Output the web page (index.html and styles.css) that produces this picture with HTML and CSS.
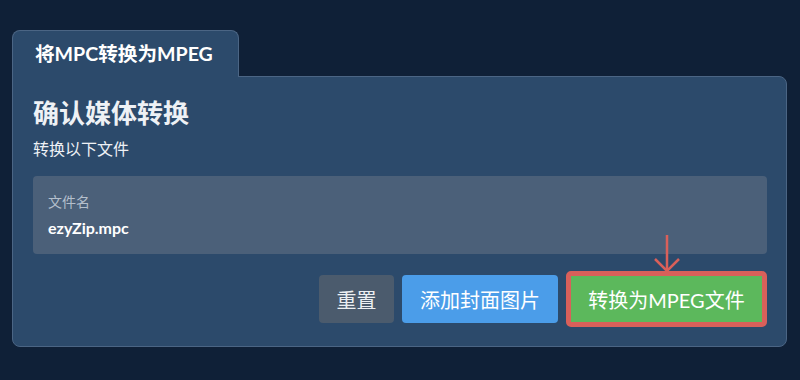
FILE: index.html
```html
<!DOCTYPE html>
<html lang="zh">
<head>
  <meta charset="UTF-8" />
  <meta name="viewport" content="width=device-width, initial-scale=1.0"/>
  <title>将MPC转换为MPEG</title>
  <link rel="stylesheet" href="styles.css">
</head>
<body>

  <div class="wrap">
    <div class="tab">将MPC转换为MPEG</div>
    <div class="panel">
      <h2 class="title">确认媒体转换</h2>
      <p class="subtitle">转换以下文件</p>

      <div class="file-box">
        <div class="file-label">文件名</div>
        <div class="file-name">ezyZip.mpc</div>
      </div>

      <div class="actions">
        <button class="btn btn-reset">重置</button>
        <button class="btn btn-cover">添加封面图片</button>
        <button class="btn btn-convert">
          转换为MPEG文件
          <svg class="arrow" width="28" height="40" viewBox="0 0 28 40">
            <line x1="14" y1="1" x2="14" y2="37" />
            <polyline points="2,25 14,37 26,25" />
          </svg>
        </button>
      </div>
    </div>
  </div>

</body>
</html>
```

FILE: styles.css
```css
body { margin: 0; padding: 0; background: #0f2037; font-family: Lato, "Noto Sans CJK SC", sans-serif; color: #fff; }
.wrap { padding: 30px 13px 0 12px; }
.tab { display: inline-block; position: relative; z-index: 1; width: 227px; height: 47px; line-height: 46px; padding: 0 0 0 22px; margin-bottom: -1px; background: #2c4a6b; border: 1px solid #4b6584; border-bottom: none; border-radius: 8px 8px 0 0; font-size: 19.6px; font-weight: bold; box-sizing: border-box; white-space: nowrap; }
.panel { background: #2c4a6b; border: 1px solid #4b6584; border-radius: 0 8px 8px 8px; padding: 20px 19px 19px 20px; }
.title { margin: 0; font-size: 26px; line-height: 32px; font-weight: bold; color: #eef1f5; }
.subtitle { margin: 8px 0 0; font-size: 16px; line-height: 24px; color: #eef1f5; }
.file-box { margin-top: 15px; background: #4b6079; border-radius: 4px; padding: 16px 15px 15px; }
.file-label { font-size: 14px; line-height: 20px; color: #b4bfcc; }
.file-name { margin-top: 5px; font-size: 16px; line-height: 22px; font-weight: bold; }
.actions { display: flex; justify-content: flex-end; align-items: center; margin-top: 17px; }
.btn { height: 48px; padding: 0 17px; border: none; border-radius: 4px; font-family: inherit; font-size: 20px; color: #fff; cursor: pointer; box-sizing: border-box; }
.btn-reset { width: 75px; padding: 0; background: #4b5b6d; color: #eceff2; }
.btn-cover { width: 156px; padding: 0; margin-left: 8px; background: #4b9de9; }
.btn-convert { position: relative; width: 201px; height: 56px; padding: 0; margin-left: 8px; background: #5cb85c; border: 5px solid #d9605a; border-radius: 5px; }
.arrow { position: absolute; left: 50%; bottom: 100%; margin-bottom: 2px; transform: translateX(-50%); fill: none; stroke: #d9605a; stroke-width: 2.5; }
```
